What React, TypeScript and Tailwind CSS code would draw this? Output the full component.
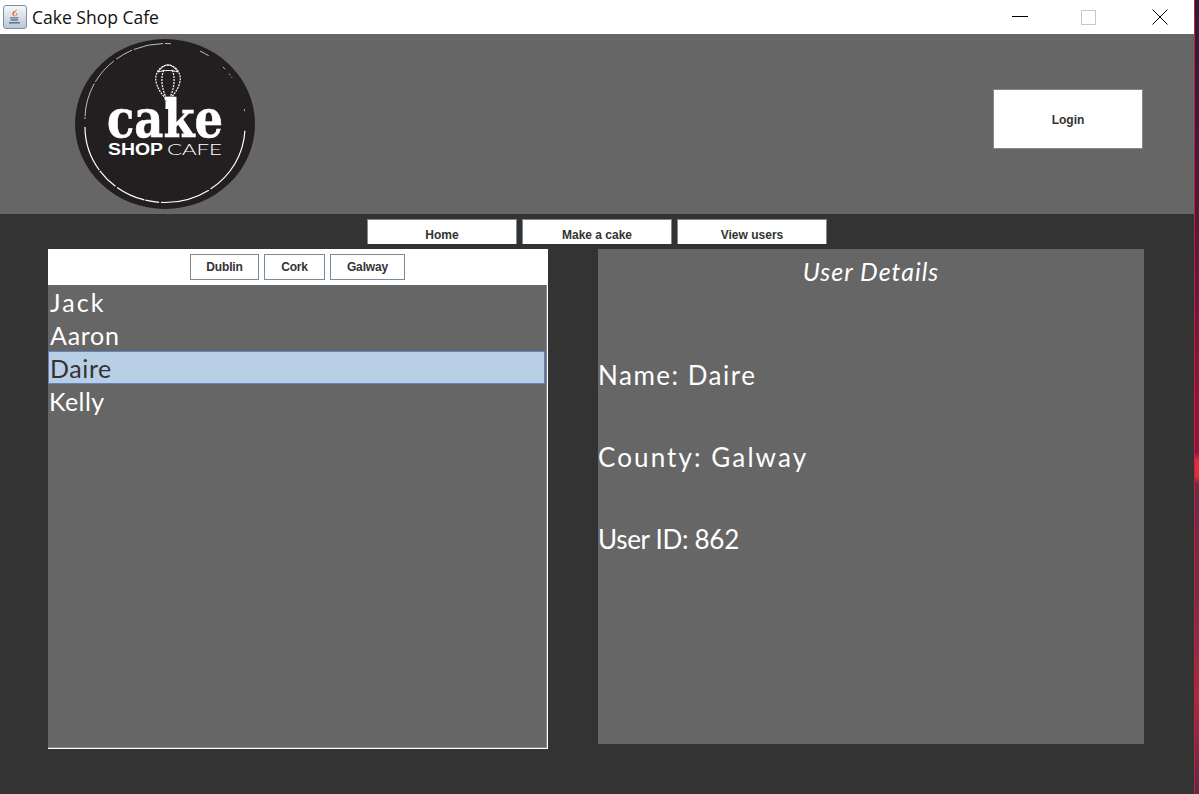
import React from "react";

const sans = "[font-family:'Liberation_Sans',Arial,sans-serif]";

function JavaIcon() {
  return (
    <div className="w-6 h-6 rounded-[3px] border border-[#7f8fa3] bg-gradient-to-b from-[#f6f8fb] to-[#b9c6d5] flex items-center justify-center">
      <svg width="18" height="18" viewBox="0 0 18 18" fill="none">
        <path d="M10.500 1C11.500 3.500 7 4.500 8 7c.3.800 1.200 1.500 1.200 1.500C7 8 5.500 6.500 6.500 4.500 7.500 3 10 3 10.500 1z" fill="#e0702a" />
        <path d="M10.500 5c1 1-.5 2-.8 3" stroke="#e0702a" strokeWidth="1" />
        <path d="M4 9.800h8.500M4.500 12h7.500" stroke="#64778e" strokeWidth="1.300" />
        <path d="M3 14.800h11" stroke="#64778e" strokeWidth="1.600" />
      </svg>
    </div>
  );
}

function Logo() {
  return (
    <svg width="180" height="170" viewBox="0 0 180 170" className="block">
      <ellipse cx="90" cy="85" rx="90" ry="85" fill="#231f20" />
      <path d="M10 88A80 75.500 0 0 0 170 88" fill="none" stroke="#fff" strokeWidth="1.200" strokeDasharray="46 1 22 2 30 1 14 2 50 2 70" />
      <path d="M10 80A80 75.500 0 0 1 170 80" fill="none" stroke="#fff" strokeWidth="0.700" strokeDasharray="2 1 34 2 28 3 18 2 30 2 6 30 10 18 3 6 2" />
      <g fill="none" stroke="#fff" strokeWidth="1.200" strokeDasharray="2 1">
        <path d="M93 62C81 50 79 40 82 34c2-5 7-8 11-8s9 3 11 8c3 6 1 16-11 28z" />
        <path d="M93 62c-6-10-8-22-4-32M93 62c6-10 8-22 4-32" />
      </g>
      <path d="M83 33c3-4 6-7 10-7s7 3 10 7c-6-2-14-2-20 0z" fill="none" stroke="#fff" strokeWidth="1" />
      <rect x="90.500" y="62" width="5" height="8" fill="#fff" />
      <text x="32" y="98" fontFamily="'DejaVu Serif', serif" fontWeight="700" fontSize="52" fill="#fff" stroke="#fff" strokeWidth="0.600" textLength="116" lengthAdjust="spacingAndGlyphs">cake</text>
      <text x="33" y="116" fontFamily="'Liberation Sans', Arial, sans-serif" fontWeight="700" fontSize="16" fill="#fff" textLength="55" lengthAdjust="spacingAndGlyphs">SHOP</text>
      <text x="92" y="116" fontFamily="'Lato', sans-serif" fontWeight="300" fontSize="16" fill="#fff" textLength="55" lengthAdjust="spacingAndGlyphs">CAFE</text>
    </svg>
  );
}

function NavButton({ label }: { label: string }) {
  return (
    <div className={`w-[150px] h-[25px] bg-white border-x border-t border-[#7a8a99] flex justify-center pt-[8px] text-[12px] leading-[14px] font-bold text-[#333333] ${sans}`}>
      {label}
    </div>
  );
}

function FilterButton({ label, w }: { label: string; w: string }) {
  return (
    <div className={`${w} h-[26px] bg-white border border-[#7a8a99] flex items-center justify-center text-[12px] font-bold tracking-[-0.15px] text-[#333333] ${sans}`}>
      {label}
    </div>
  );
}

const bodyFont = "font-['Lato',sans-serif]";

export default function App() {
  return (
    <div className="w-[1199px] h-[794px] overflow-hidden flex bg-[#333333]">
      <div className="w-[1194px] h-full flex flex-col">
        <div className="h-[34px] bg-white flex items-center pl-[3px] shrink-0">
          <JavaIcon />
          <span className="ml-[5px] text-[17.5px] text-[#111] font-['Open_Sans',sans-serif]">Cake Shop Cafe</span>
          <div className="ml-auto flex items-center h-full">
            <svg width="18" height="2" className="mr-[52px]"><rect width="16" height="1" x="1" fill="#000" /></svg>
            <div className="w-[15px] h-[15px] border border-[#c8c8c8] mr-[56px]" />
            <svg width="16" height="16" className="mr-[26px]" stroke="#000" strokeWidth="1"><path d="M0.500 0.500L15.500 15.500M15.500 0.500L0.500 15.500" /></svg>
          </div>
        </div>
        <div className="h-[180px] bg-[#666666] flex items-start justify-between shrink-0 pl-[75px] pr-[51px]">
          <div className="pt-[5px]"><Logo /></div>
          <div className={`mt-[55px] w-[150px] h-[60px] bg-white border border-[#7a8a99] flex items-center justify-center pt-[1px] text-[12px] font-bold text-[#333333] ${sans}`}>Login</div>
        </div>
        <div className="h-[35px] flex justify-start gap-[5px] pl-[367px] pt-[5px] shrink-0">
          <NavButton label="Home" />
          <NavButton label="Make a cake" />
          <NavButton label="View users" />
        </div>
        <div className="flex items-start pl-[48px]">
          <div className="w-[500px] h-[500px] bg-white flex flex-col">
            <div className="h-[36px] flex justify-center gap-[5px] pt-[5px] pr-[1px] shrink-0">
              <FilterButton label="Dublin" w="w-[69px]" />
              <FilterButton label="Cork" w="w-[61px]" />
              <FilterButton label="Galway" w="w-[75px]" />
            </div>
            <div className={`w-[499px] h-[463px] bg-[#666666] border-r border-b border-[#7a8a99] pl-[1px] text-white text-[25px] leading-[33px] ${bodyFont}`}>
              <div className="tracking-[2.1px] pt-[1px] pl-[1px] h-[33px]">Jack</div>
              <div className="tracking-[0.7px] pt-[1px] pl-[1px] h-[33px]">Aaron</div>
              <div className="w-[497px] h-[33px] -ml-[1px] pl-[1px] bg-[#b8cfe5] border border-[#6382bf] text-[#333333] leading-[32px] tracking-[0.6px]">Daire</div>
              <div className="tracking-[0.4px] pt-[1px] h-[33px]">Kelly</div>
            </div>
          </div>
          <div className={`ml-[50px] w-[546px] h-[495px] bg-[#666666] flex flex-col text-white text-[26px] leading-[33px] ${bodyFont}`}>
            <div className="text-center italic h-[46px] pt-[6px] text-[25px] tracking-[1px]">User Details</div>
            <div className="mt-[64px] tracking-[1.5px]">Name: Daire</div>
            <div className="mt-[49px] tracking-[2.1px]">County: Galway</div>
            <div className="mt-[49px] tracking-[-0.3px]">User ID: 862</div>
          </div>
        </div>
      </div>
      <div className="w-[5px] h-full flex">
        <div className="w-[1px] h-full bg-[#c41e3a]" />
        <div className="w-[4px] h-full bg-[linear-gradient(to_bottom,#2b1c38_0%,#4a1c3a_25%,#8a1738_50%,#8a1738_57%,#d9303c_58%,#d9303c_60%,#6b2c46_61%,#7a2c45_75%,#a32c40_88%,#5a2a48_100%)]" />
      </div>
    </div>
  );
}
